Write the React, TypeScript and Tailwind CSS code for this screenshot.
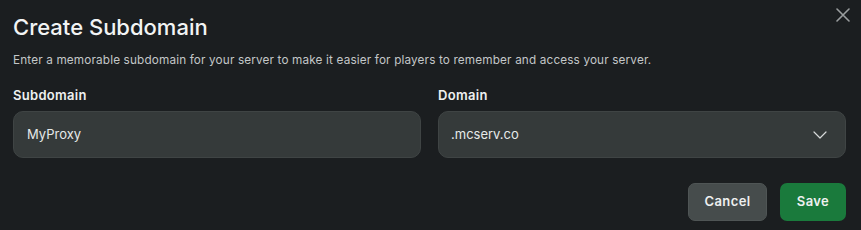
import React from "react";

export default function App() {
  return (
    <div
      className="relative w-[861px] h-[230px] bg-[#1b1e20] px-[13px] pt-[12px] text-[#eceeee]"
      style={{ fontFamily: "Inter, 'Noto Sans', sans-serif" }}
    >
      <button className="absolute right-[11px] top-[8px] w-[14px] h-[14px] text-[#9a9e9f]">
        <svg viewBox="0 0 14 14" width="14" height="14" fill="none" stroke="currentColor" strokeWidth="1.6" strokeLinecap="round">
          <path d="M1 1L13 13M13 1L1 13" />
        </svg>
      </button>
      <h2 className="text-[22px] leading-[30px] font-medium text-[#f2f4f4] tracking-[0px]">Create Subdomain</h2>
      <p className="mt-[10px] text-[11.75px] leading-[16px] text-[#c3c7c8] tracking-[0.15px]">
        Enter a memorable subdomain for your server to make it easier for players to remember and access your server.
      </p>
      <div className="mt-[19px] grid grid-cols-2 gap-[17px] w-[833px]">
        <div className="flex flex-col">
          <label className="text-[13px] leading-[16px] font-semibold text-[#eef0f0] tracking-[0.3px]">Subdomain</label>
          <div className="mt-[8px] h-[47px] rounded-[10px] bg-[#353a3a] border border-[#3f4444] flex items-center px-[13px] text-[13px] text-[#e6e9e9]">
            MyProxy
          </div>
        </div>
        <div className="flex flex-col">
          <label className="text-[13px] leading-[16px] font-semibold text-[#eef0f0] tracking-[0.3px]">Domain</label>
          <div className="mt-[8px] h-[47px] rounded-[10px] bg-[#353a3a] border border-[#3f4444] flex items-center justify-between pl-[12px] pr-[18px] text-[13px] text-[#e6e9e9]">
            <span>.mcserv.co</span>
            <svg viewBox="0 0 14 8" width="14" height="8" fill="none" stroke="#d6d9d9" strokeWidth="1.2" strokeLinecap="round" strokeLinejoin="round">
              <path d="M1 1L7 7L13 1" />
            </svg>
          </div>
        </div>
      </div>
      <div className="mt-[25px] flex justify-end gap-[13px] w-[833px]">
        <button className="h-[38px] w-[79px] rounded-[7px] bg-[#464c4c] border border-[#4f5555] text-[13px] font-semibold text-[#eef0f0] tracking-[0.4px]">
          Cancel
        </button>
        <button className="h-[38px] w-[66px] rounded-[7px] bg-[#1a7a3c] text-[13px] font-semibold text-[#eef0f0] tracking-[0.4px]">
          Save
        </button>
      </div>
    </div>
  );
}
